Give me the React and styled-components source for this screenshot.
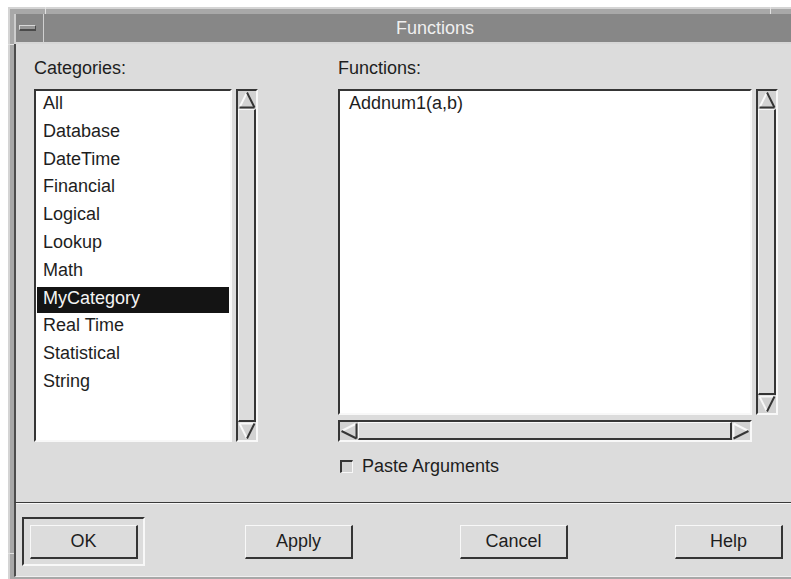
import React from 'react'
import styled, { createGlobalStyle } from 'styled-components'

const light = '#f8f8f8'
const dark = '#353535'
const face = '#dcdcdc'
const ink = '#1e1e1e'

const categories = [
  'All', 'Database', 'DateTime', 'Financial', 'Logical', 'Lookup',
  'Math', 'MyCategory', 'Real Time', 'Statistical', 'String',
]

// little bevelled triangle used on scrollbar buttons
const Arrow = ({ dir }) => {
  const a = 1.5, b = 16.5, m = 9
  const edges = {
    up: [[a, b, m, a, light], [m, a, b, b, dark], [a, b, b, b, dark]],
    down: [[a, a, b, a, light], [a, a, m, b, light], [b, a, m, b, dark]],
    left: [[a, m, b, a, light], [b, a, b, b, dark], [a, m, b, b, dark]],
    right: [[a, a, a, b, light], [a, a, b, m, light], [a, b, b, m, dark]],
  }[dir]
  return (
    <ArrowBox>
      <svg width="18" height="18" viewBox="0 0 18 18">
        {edges.map(([x1, y1, x2, y2, c], i) =>
          <line key={i} x1={x1} y1={y1} x2={x2} y2={y2} stroke={c} strokeWidth="2" />)}
      </svg>
    </ArrowBox>
  )
}

const ScrollBar = ({ horizontal }) =>
  <Track $horizontal={horizontal}>
    <Arrow dir={horizontal ? 'left' : 'up'} />
    <Thumb />
    <Arrow dir={horizontal ? 'right' : 'down'} />
  </Track>

export default () =>
  <>
    <GlobalStyle />
    <Window>
      <Notch $edge="top" $at={35} />
      <Notch $edge="top" $at={760} />
      <Notch $edge="left" $at={35} />
      <Notch $edge="left" $at={544} />
      <TitleBar>
        <MenuButton><MenuGlyph /></MenuButton>
        <Title>Functions</Title>
      </TitleBar>
      <Panel>
        <Column $width={224}>
          <Label>Categories:</Label>
          <ListPair>
            <ListBox $width={198}>
              {categories.map(c =>
                <Item key={c} $selected={c === 'MyCategory'}>{c}</Item>)}
            </ListBox>
            <ScrollBar />
          </ListPair>
        </Column>
        <Column $width={440}>
          <Label>Functions:</Label>
          <FunctionGrid>
            <ListBox>
              <Item $pad={8}>Addnum1(a,b)</Item>
            </ListBox>
            <ScrollBar />
            <ScrollBar horizontal />
          </FunctionGrid>
          <CheckRow>
            <CheckBox />
            Paste Arguments
          </CheckRow>
        </Column>
      </Panel>
      <ButtonBar>
        <DefaultRing><Button>OK</Button></DefaultRing>
        <Button>Apply</Button>
        <Button>Cancel</Button>
        <Button>Help</Button>
      </ButtonBar>
    </Window>
  </>

const GlobalStyle = createGlobalStyle`
  * { box-sizing: border-box; }
  html, body {
    margin: 0;
    background: #fff;
    overflow: hidden;
    font-family: "Liberation Sans", Arial, sans-serif;
    font-size: 18px;
    color: ${ink};
  }
`

const Window = styled.div`
  position: relative;
  margin: 7px 0 0 8px;
  width: 820px;
  background: #a8a8a8;
  border-top: 2px solid #d4d4d4;
  border-left: 2px solid #d4d4d4;
  padding: 5px 6px 2px 4px;
`

const Notch = styled.div`
  position: absolute;
  background: #e2e2e2;
  ${({ $edge, $at }) => $edge === 'top'
    ? `left: ${$at}px; top: -2px; width: 1px; height: 7px;`
    : `top: ${$at}px; left: -2px; height: 1px; width: 6px;`}
`

const TitleBar = styled.div`
  display: flex;
  height: 30px;
  background: #878787;
  border-left: 2px solid #cdcdcd;
  border-bottom: 2px solid #d6d6d6;
`

const MenuButton = styled.div`
  width: 28px;
  display: flex;
  align-items: center;
  justify-content: center;
  border-right: 1px solid #d0d0d0;
  padding-right: 4px;
`

const MenuGlyph = styled.div`
  width: 17px;
  height: 6px;
  background: #979797;
  border-top: 1px solid #d8d8d8;
  border-left: 1px solid #d8d8d8;
  border-bottom: 2px solid #4a4a4a;
  border-right: 1px solid #4a4a4a;
`

const Title = styled.div`
  flex: 1;
  text-align: center;
  line-height: 28px;
  color: #efefef;
  padding-left: 4px;
`

const Panel = styled.div`
  display: flex;
  gap: 80px;
  height: 458px;
  background: ${face};
  border-left: 2px solid #4c4c4c;
  padding: 13px 0 0 18px;
`

const Column = styled.div`
  display: flex;
  flex-direction: column;
  width: ${({ $width }) => $width}px;
`

const Label = styled.div`
  line-height: 22px;
  margin-bottom: 10px;
`

const ListPair = styled.div`
  display: flex;
  gap: 4px;
  height: 353px;
`

const FunctionGrid = styled.div`
  display: grid;
  grid-template-columns: 414px 22px;
  grid-template-rows: 326px 22px;
  column-gap: 4px;
  row-gap: 5px;
`

const ListBox = styled.div`
  width: ${({ $width }) => ($width ? `${$width}px` : 'auto')};
  background: #fff;
  border: 2px solid;
  border-color: ${dark} ${light} ${light} ${dark};
  padding: 1px 1px 0 1px;
`

const Item = styled.div`
  height: 26px;
  margin-bottom: 1.8px;
  line-height: 22px;
  padding-left: ${({ $pad }) => $pad ?? 6}px;
  white-space: nowrap;
  background: ${({ $selected }) => ($selected ? '#141414' : 'transparent')};
  color: ${({ $selected }) => ($selected ? '#f4f4f4' : ink)};
`

const Track = styled.div`
  display: flex;
  flex-direction: ${({ $horizontal }) => ($horizontal ? 'row' : 'column')};
  background: #d2d2d2;
  border: 2px solid;
  border-color: ${dark} ${light} ${light} ${dark};
`

const ArrowBox = styled.div`
  flex: none;
  width: 18px;
  height: 18px;
  display: flex;
`

const Thumb = styled.div`
  flex: 1;
  background: ${face};
  border-style: solid;
  border-width: 1px 2px 2px 1px;
  border-color: ${light} ${dark} ${dark} ${light};
`

const CheckRow = styled.div`
  display: flex;
  align-items: center;
  gap: 9px;
  margin-top: 13px;
  padding-left: 2px;
  line-height: 22px;
`

const CheckBox = styled.div`
  width: 13px;
  height: 13px;
  background: #d2d2d2;
  border-style: solid;
  border-width: 2px 1px 1px 2px;
  border-color: ${dark} ${light} ${light} ${dark};
`

const ButtonBar = styled.div`
  display: grid;
  grid-template-columns: repeat(4, 215px);
  align-items: start;
  height: 75px;
  background: ${face};
  border-left: 2px solid #4c4c4c;
  border-top: 1px solid #3a3a3a;
  box-shadow: inset 0 1px 0 ${light};
  border-bottom: 1px solid #f0f0f0;
  padding: 22px 0 0 14px;
`

const DefaultRing = styled.div`
  position: relative;
  width: 108px;

  &::before {
    content: '';
    position: absolute;
    inset: -8px -7px -7px -8px;
    border: 2px solid;
    border-color: ${dark} ${light} ${light} ${dark};
  }
`

const Button = styled.button`
  position: relative;
  width: 108px;
  height: 34px;
  padding: 0;
  background: ${face};
  font: inherit;
  color: ${ink};
  border-style: solid;
  border-width: 1px 2px 2px 1px;
  border-color: ${light} ${dark} ${dark} ${light};
`
